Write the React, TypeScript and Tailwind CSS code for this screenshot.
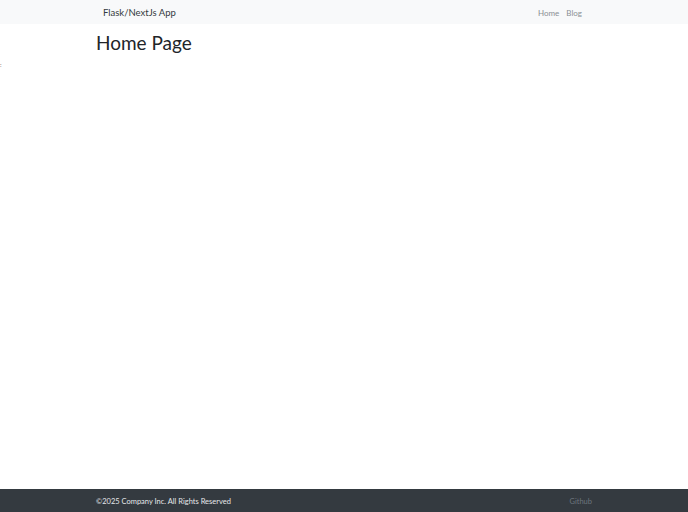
import React from 'react';

const App: React.FC = () => {
  return (
    <div className="min-h-screen flex flex-col bg-white text-[#212529]" style={{ fontFamily: 'Lato, "Open Sans", sans-serif' }}>
      {/* Navbar */}
      <nav className="bg-[#f8f9fa] h-[24px] flex items-center">
        <div className="w-[496px] mx-auto flex items-center justify-between pl-[7px] pr-[10px]">
          <span className="text-[9.5px] text-[#343a40] pt-[3px]">Flask/NextJs App</span>
          <div className="flex items-center gap-[7px] text-[8px] text-[#8a8f94] pt-[1px]">
            <span>Home</span>
            <span>Blog</span>
          </div>
        </div>
      </nav>

      {/* Main */}
      <main className="flex-1 relative">
        <span className="absolute left-0 top-[36px] text-[6px] text-[#555]">:</span>
        <div className="w-[496px] mx-auto pt-[6px]">
          <h1 className="text-[19px] leading-[26px] text-[#212529]">Home Page</h1>
        </div>
      </main>

      {/* Footer */}
      <footer className="bg-[#343a40] h-[23px] flex items-center">
        <div className="w-[496px] mx-auto flex items-center justify-between pt-[2px]">
          <span className="text-[7.5px] text-[#e5e7ea]">©2025 Company Inc. All Rights Reserved</span>
          <span className="text-[7.5px] text-[#6c757d]">Github</span>
        </div>
      </footer>
    </div>
  );
};

export default App;
